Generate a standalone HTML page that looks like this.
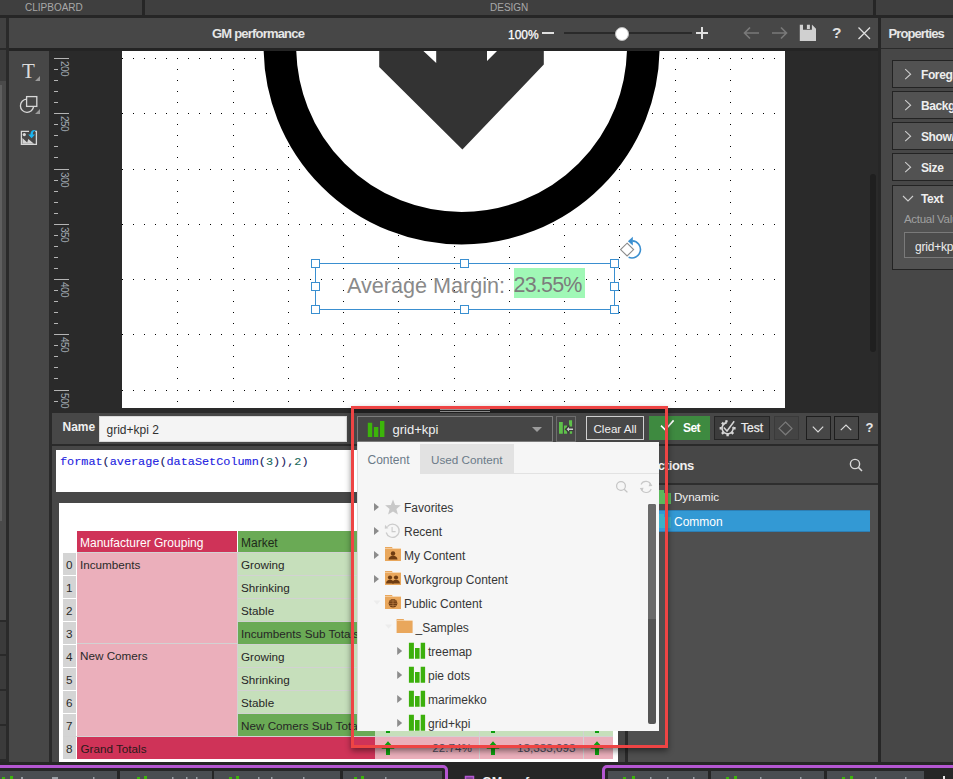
<!DOCTYPE html>
<html><head><meta charset="utf-8"><style>
*{margin:0;padding:0;box-sizing:border-box}
html,body{width:953px;height:779px;overflow:hidden;background:#2a2a2a;font-family:"Liberation Sans",sans-serif}
.a{position:absolute}
.t{position:absolute;white-space:pre;line-height:1}

</style></head><body>
<!-- top strip -->
<div class="a" style="left:0;top:0;width:953px;height:15px;background:#3f3f3f"></div>
<div class="a" style="left:142px;top:0;width:3px;height:15px;background:#262626"></div>
<div class="a" style="left:873px;top:0;width:3px;height:15px;background:#262626"></div>
<div class="a" style="left:0;top:15px;width:953px;height:3px;background:#262626"></div>
<div class="t" style="left:25px;top:3px;font-size:10px;color:#a8a8a8">CLIPBOARD</div>
<div class="t" style="left:490px;top:3px;font-size:10px;color:#a8a8a8">DESIGN</div>
<!-- left column -->
<div class="a" style="left:0;top:18px;width:6px;height:30px;background:#414141"></div>
<div class="a" style="left:0;top:48px;width:6px;height:1.5px;background:#2a2a2a"></div>
<div class="a" style="left:0;top:49.5px;width:6px;height:31.5px;background:#3c3c3c"></div>
<div class="a" style="left:0;top:81px;width:6px;height:539px;background:#4a4a4a"></div>
<div class="a" style="left:0;top:85px;width:2px;height:436px;background:#5f5f5f"></div>
<div class="a" style="left:0;top:622px;width:6px;height:32px;background:#3b3b3b"></div>
<div class="a" style="left:0;top:656px;width:6px;height:33px;background:#3b3b3b"></div>
<div class="a" style="left:0;top:691px;width:6px;height:33px;background:#3b3b3b"></div>
<div class="a" style="left:0;top:726px;width:6px;height:33px;background:#3b3b3b"></div>
<!-- title bar -->
<div class="a" style="left:9px;top:18px;width:869px;height:30px;background:#474747"></div>
<div class="t" style="left:212px;top:27px;font-size:13px;color:#e6e6e6;font-weight:700;letter-spacing:-0.8px">GM performance</div>
<div class="t" style="left:508px;top:28.5px;font-size:12px;color:#fff;-webkit-text-stroke:0.25px #fff">100%</div>
<div class="a" style="left:542px;top:32px;width:12px;height:2px;background:#e0e0e0"></div>
<div class="a" style="left:564px;top:32px;width:128px;height:2px;background:#2a2a2a"></div>
<div class="a" style="left:615px;top:27px;width:14px;height:14px;border-radius:50%;background:#fff;border:1.5px solid #bdbdbd"></div>
<div class="a" style="left:696px;top:32px;width:12px;height:2px;background:#e0e0e0"></div>
<div class="a" style="left:701px;top:27px;width:2px;height:12px;background:#e0e0e0"></div>
<svg class="a" style="left:740px;top:24px" width="140" height="20" viewBox="740 24 140 20">
 <g fill="none" stroke="#7a7a7a" stroke-width="1.6">
  <path d="M744 33H759M750 27.5L744.5 33L750 38.5"/>
  <path d="M772 33H787M781 27.5L786.5 33L781 38.5"/>
 </g>
 <path fill="#d0d0d0" d="M799.8 24.8H812.1L816 28.7V41H799.8Z M803 24.8V29.8H811.9V24.8Z M806.9 24.8H809.9V29H806.9Z" fill-rule="evenodd"/>
 <path fill="none" stroke="#7a7a7a" stroke-width="0" d=""/>
 <g stroke="#e0e0e0" stroke-width="1.3" fill="none"><path d="M858.5 27.5L870 39M870 27.5L858.5 39"/></g>
</svg>
<div class="t" style="left:832px;top:25px;font-size:15.5px;font-weight:700;color:#e0e0e0">?</div>
<div class="a" style="left:9px;top:48px;width:869px;height:3px;background:#242424"></div>
<!-- divider + properties -->
<div class="a" style="left:878px;top:18px;width:3px;height:761px;background:#262626"></div>
<div class="a" style="left:881px;top:18px;width:72px;height:29.5px;background:#474747"></div>
<div class="a" style="left:881px;top:48.5px;width:72px;height:713px;background:#474747"></div>
<div class="t" style="left:888.5px;top:27px;font-size:13px;font-weight:700;color:#e6e6e6;letter-spacing:-0.9px">Properties</div>
<!-- props -->
<div class="a" style="left:892px;top:60px;width:70px;height:28px;background:#525252;border:1.5px solid #232323"></div>
<div class="a" style="left:892px;top:91px;width:70px;height:28px;background:#525252;border:1.5px solid #232323"></div>
<div class="a" style="left:892px;top:122px;width:70px;height:28px;background:#525252;border:1.5px solid #232323"></div>
<div class="a" style="left:892px;top:153px;width:70px;height:28px;background:#525252;border:1.5px solid #232323"></div>
<div class="a" style="left:892px;top:184.5px;width:70px;height:85px;background:#525252;border:1.5px solid #232323"></div>
<svg class="a" style="left:900px;top:60px" width="20" height="150" viewBox="900 60 20 150"><g fill="none" stroke="#cfcfcf" stroke-width="1.1">
 <path d="M905.2 69.2L910.6 74.2L905.2 79.2"/><path d="M905.2 100.2L910.6 105.2L905.2 110.2"/><path d="M905.2 131.2L910.6 136.2L905.2 141.2"/><path d="M905.2 162.2L910.6 167.2L905.2 172.2"/>
 <path d="M903 196L908 201L913 196"/></g></svg>
<div class="t" style="left:921px;top:69px;font-size:12px;font-weight:700;color:#eeeeee;letter-spacing:-0.4px">Foreground</div>
<div class="t" style="left:921px;top:100px;font-size:12px;font-weight:700;color:#eeeeee;letter-spacing:-0.4px">Background</div>
<div class="t" style="left:921px;top:131px;font-size:12px;font-weight:700;color:#eeeeee;letter-spacing:-0.4px">Show/Hide</div>
<div class="t" style="left:921px;top:162px;font-size:12px;font-weight:700;color:#eeeeee;letter-spacing:-0.4px">Size</div>
<div class="t" style="left:921px;top:193px;font-size:12px;font-weight:700;color:#eeeeee;letter-spacing:-0.4px">Text</div>
<div class="t" style="left:904px;top:213.5px;font-size:11.5px;color:#a0a0a0;letter-spacing:-0.3px">Actual Value</div>
<div class="a" style="left:904px;top:232px;width:60px;height:26px;border:1px solid #7a7a7a;background:#4c4c4c"></div>
<div class="t" style="left:915px;top:241px;font-size:12px;color:#ececec;letter-spacing:-0.2px">grid+kpi 2</div>
<!-- /props -->
<!-- left toolbar -->
<div class="a" style="left:9px;top:51px;width:40px;height:711px;background:#474747"></div>
<!-- tbicons -->
<div class="t" style="left:22px;top:61px;font-family:'Liberation Serif',serif;font-size:21px;color:#dcdcdc;line-height:21px">T</div>
<svg class="a" style="left:9px;top:51px" width="40" height="110" viewBox="9 51 40 110">
 <path fill="#9a9a9a" d="M35 81H40V76Z M35 114H40V109Z"/>
 <g fill="none" stroke="#d8d8d8" stroke-width="1.3">
  <rect x="26.6" y="96.6" width="10.2" height="9.8"/>
  <path d="M26.6 99.2A6.6 6.6 0 1 0 33.6 106.4"/>
  <path d="M29 131.4H21.4V144.4H36.4V131.4H35.2"/>
 </g>
 <circle cx="24.3" cy="134.6" r="1.6" fill="#d8d8d8"/>
 <path fill="#d4d4d4" d="M22.4 138L27.2 142.4L28.3 139L34 143.8H22.4Z"/>
 <path fill="#1ab4f0" d="M36.6 130.6C34 129 30.5 130 30.4 134.4H28.2L31.6 138.2L35 134.4H32.8C32.8 132 34.2 130.8 36.6 130.6Z"/>
</svg>
<!-- /tbicons -->
<!-- ruler -->
<div class="a" style="left:54px;top:58px;width:15px;height:1px;background:#b4b4b4"></div>
<div class="a" style="left:54px;top:69px;width:4px;height:1px;background:#b4b4b4"></div>
<div class="a" style="left:54px;top:80px;width:4px;height:1px;background:#b4b4b4"></div>
<div class="a" style="left:54px;top:91px;width:4px;height:1px;background:#b4b4b4"></div>
<div class="a" style="left:54px;top:102px;width:4px;height:1px;background:#b4b4b4"></div>
<div class="a" style="left:54px;top:113px;width:15px;height:1px;background:#b4b4b4"></div>
<div class="a" style="left:54px;top:124px;width:4px;height:1px;background:#b4b4b4"></div>
<div class="a" style="left:54px;top:135px;width:4px;height:1px;background:#b4b4b4"></div>
<div class="a" style="left:54px;top:146px;width:4px;height:1px;background:#b4b4b4"></div>
<div class="a" style="left:54px;top:157px;width:4px;height:1px;background:#b4b4b4"></div>
<div class="a" style="left:54px;top:169px;width:15px;height:1px;background:#b4b4b4"></div>
<div class="a" style="left:54px;top:180px;width:4px;height:1px;background:#b4b4b4"></div>
<div class="a" style="left:54px;top:191px;width:4px;height:1px;background:#b4b4b4"></div>
<div class="a" style="left:54px;top:202px;width:4px;height:1px;background:#b4b4b4"></div>
<div class="a" style="left:54px;top:213px;width:4px;height:1px;background:#b4b4b4"></div>
<div class="a" style="left:54px;top:224px;width:15px;height:1px;background:#b4b4b4"></div>
<div class="a" style="left:54px;top:235px;width:4px;height:1px;background:#b4b4b4"></div>
<div class="a" style="left:54px;top:246px;width:4px;height:1px;background:#b4b4b4"></div>
<div class="a" style="left:54px;top:257px;width:4px;height:1px;background:#b4b4b4"></div>
<div class="a" style="left:54px;top:268px;width:4px;height:1px;background:#b4b4b4"></div>
<div class="a" style="left:54px;top:279px;width:15px;height:1px;background:#b4b4b4"></div>
<div class="a" style="left:54px;top:290px;width:4px;height:1px;background:#b4b4b4"></div>
<div class="a" style="left:54px;top:301px;width:4px;height:1px;background:#b4b4b4"></div>
<div class="a" style="left:54px;top:312px;width:4px;height:1px;background:#b4b4b4"></div>
<div class="a" style="left:54px;top:323px;width:4px;height:1px;background:#b4b4b4"></div>
<div class="a" style="left:54px;top:334px;width:15px;height:1px;background:#b4b4b4"></div>
<div class="a" style="left:54px;top:345px;width:4px;height:1px;background:#b4b4b4"></div>
<div class="a" style="left:54px;top:356px;width:4px;height:1px;background:#b4b4b4"></div>
<div class="a" style="left:54px;top:367px;width:4px;height:1px;background:#b4b4b4"></div>
<div class="a" style="left:54px;top:378px;width:4px;height:1px;background:#b4b4b4"></div>
<div class="a" style="left:54px;top:390px;width:15px;height:1px;background:#b4b4b4"></div>
<div class="a" style="left:54px;top:401px;width:4px;height:1px;background:#b4b4b4"></div>
<div class="t" style="left:59px;top:60px;font-size:10px;color:#a0a8b0;writing-mode:vertical-rl;line-height:10px;letter-spacing:-0.5px;margin-top:0.8px">200</div>
<div class="t" style="left:59px;top:115px;font-size:10px;color:#a0a8b0;writing-mode:vertical-rl;line-height:10px;letter-spacing:-0.5px;margin-top:0.8px">250</div>
<div class="t" style="left:59px;top:171px;font-size:10px;color:#a0a8b0;writing-mode:vertical-rl;line-height:10px;letter-spacing:-0.5px;margin-top:0.8px">300</div>
<div class="t" style="left:59px;top:226px;font-size:10px;color:#a0a8b0;writing-mode:vertical-rl;line-height:10px;letter-spacing:-0.5px;margin-top:0.8px">350</div>
<div class="t" style="left:59px;top:281px;font-size:10px;color:#a0a8b0;writing-mode:vertical-rl;line-height:10px;letter-spacing:-0.5px;margin-top:0.8px">400</div>
<div class="t" style="left:59px;top:336px;font-size:10px;color:#a0a8b0;writing-mode:vertical-rl;line-height:10px;letter-spacing:-0.5px;margin-top:0.8px">450</div>
<div class="t" style="left:59px;top:392px;font-size:10px;color:#a0a8b0;writing-mode:vertical-rl;line-height:10px;letter-spacing:-0.5px;margin-top:0.8px">500</div>
<!-- /ruler -->
<!-- canvas -->
<div class="a" style="left:122px;top:51px;width:663px;height:357px;background:#fff;overflow:hidden">
<svg class="a" style="left:0;top:0" width="663" height="357" viewBox="0 0 663 357" shape-rendering="crispEdges"><path fill="#000" d="M0 7h1v1h-1zM0 62h1v1h-1zM0 118h1v1h-1zM0 173h1v1h-1zM0 228h1v1h-1zM0 283h1v1h-1zM0 339h1v1h-1zM11 7h1v1h-1zM11 62h1v1h-1zM11 118h1v1h-1zM11 173h1v1h-1zM11 228h1v1h-1zM11 283h1v1h-1zM11 339h1v1h-1zM22 7h1v1h-1zM22 62h1v1h-1zM22 118h1v1h-1zM22 173h1v1h-1zM22 228h1v1h-1zM22 283h1v1h-1zM22 339h1v1h-1zM33 7h1v1h-1zM33 62h1v1h-1zM33 118h1v1h-1zM33 173h1v1h-1zM33 228h1v1h-1zM33 283h1v1h-1zM33 339h1v1h-1zM44 7h1v1h-1zM44 62h1v1h-1zM44 118h1v1h-1zM44 173h1v1h-1zM44 228h1v1h-1zM44 283h1v1h-1zM44 339h1v1h-1zM55 7h1v1h-1zM55 18h1v1h-1zM55 29h1v1h-1zM55 40h1v1h-1zM55 51h1v1h-1zM55 62h1v1h-1zM55 73h1v1h-1zM55 84h1v1h-1zM55 95h1v1h-1zM55 106h1v1h-1zM55 118h1v1h-1zM55 129h1v1h-1zM55 140h1v1h-1zM55 151h1v1h-1zM55 162h1v1h-1zM55 173h1v1h-1zM55 184h1v1h-1zM55 195h1v1h-1zM55 206h1v1h-1zM55 217h1v1h-1zM55 228h1v1h-1zM55 239h1v1h-1zM55 250h1v1h-1zM55 261h1v1h-1zM55 272h1v1h-1zM55 283h1v1h-1zM55 294h1v1h-1zM55 305h1v1h-1zM55 316h1v1h-1zM55 327h1v1h-1zM55 339h1v1h-1zM55 350h1v1h-1zM66 7h1v1h-1zM66 62h1v1h-1zM66 118h1v1h-1zM66 173h1v1h-1zM66 228h1v1h-1zM66 283h1v1h-1zM66 339h1v1h-1zM77 7h1v1h-1zM77 62h1v1h-1zM77 118h1v1h-1zM77 173h1v1h-1zM77 228h1v1h-1zM77 283h1v1h-1zM77 339h1v1h-1zM88 7h1v1h-1zM88 62h1v1h-1zM88 118h1v1h-1zM88 173h1v1h-1zM88 228h1v1h-1zM88 283h1v1h-1zM88 339h1v1h-1zM99 7h1v1h-1zM99 62h1v1h-1zM99 118h1v1h-1zM99 173h1v1h-1zM99 228h1v1h-1zM99 283h1v1h-1zM99 339h1v1h-1zM111 7h1v1h-1zM111 18h1v1h-1zM111 29h1v1h-1zM111 40h1v1h-1zM111 51h1v1h-1zM111 62h1v1h-1zM111 73h1v1h-1zM111 84h1v1h-1zM111 95h1v1h-1zM111 106h1v1h-1zM111 118h1v1h-1zM111 129h1v1h-1zM111 140h1v1h-1zM111 151h1v1h-1zM111 162h1v1h-1zM111 173h1v1h-1zM111 184h1v1h-1zM111 195h1v1h-1zM111 206h1v1h-1zM111 217h1v1h-1zM111 228h1v1h-1zM111 239h1v1h-1zM111 250h1v1h-1zM111 261h1v1h-1zM111 272h1v1h-1zM111 283h1v1h-1zM111 294h1v1h-1zM111 305h1v1h-1zM111 316h1v1h-1zM111 327h1v1h-1zM111 339h1v1h-1zM111 350h1v1h-1zM122 7h1v1h-1zM122 62h1v1h-1zM122 118h1v1h-1zM122 173h1v1h-1zM122 228h1v1h-1zM122 283h1v1h-1zM122 339h1v1h-1zM133 7h1v1h-1zM133 62h1v1h-1zM133 118h1v1h-1zM133 173h1v1h-1zM133 228h1v1h-1zM133 283h1v1h-1zM133 339h1v1h-1zM144 7h1v1h-1zM144 62h1v1h-1zM144 118h1v1h-1zM144 173h1v1h-1zM144 228h1v1h-1zM144 283h1v1h-1zM144 339h1v1h-1zM155 7h1v1h-1zM155 62h1v1h-1zM155 118h1v1h-1zM155 173h1v1h-1zM155 228h1v1h-1zM155 283h1v1h-1zM155 339h1v1h-1zM166 7h1v1h-1zM166 18h1v1h-1zM166 29h1v1h-1zM166 40h1v1h-1zM166 51h1v1h-1zM166 62h1v1h-1zM166 73h1v1h-1zM166 84h1v1h-1zM166 95h1v1h-1zM166 106h1v1h-1zM166 118h1v1h-1zM166 129h1v1h-1zM166 140h1v1h-1zM166 151h1v1h-1zM166 162h1v1h-1zM166 173h1v1h-1zM166 184h1v1h-1zM166 195h1v1h-1zM166 206h1v1h-1zM166 217h1v1h-1zM166 228h1v1h-1zM166 239h1v1h-1zM166 250h1v1h-1zM166 261h1v1h-1zM166 272h1v1h-1zM166 283h1v1h-1zM166 294h1v1h-1zM166 305h1v1h-1zM166 316h1v1h-1zM166 327h1v1h-1zM166 339h1v1h-1zM166 350h1v1h-1zM177 7h1v1h-1zM177 62h1v1h-1zM177 118h1v1h-1zM177 173h1v1h-1zM177 228h1v1h-1zM177 283h1v1h-1zM177 339h1v1h-1zM188 7h1v1h-1zM188 62h1v1h-1zM188 118h1v1h-1zM188 173h1v1h-1zM188 228h1v1h-1zM188 283h1v1h-1zM188 339h1v1h-1zM199 7h1v1h-1zM199 62h1v1h-1zM199 118h1v1h-1zM199 173h1v1h-1zM199 228h1v1h-1zM199 283h1v1h-1zM199 339h1v1h-1zM210 7h1v1h-1zM210 62h1v1h-1zM210 118h1v1h-1zM210 173h1v1h-1zM210 228h1v1h-1zM210 283h1v1h-1zM210 339h1v1h-1zM221 7h1v1h-1zM221 18h1v1h-1zM221 29h1v1h-1zM221 40h1v1h-1zM221 51h1v1h-1zM221 62h1v1h-1zM221 73h1v1h-1zM221 84h1v1h-1zM221 95h1v1h-1zM221 106h1v1h-1zM221 118h1v1h-1zM221 129h1v1h-1zM221 140h1v1h-1zM221 151h1v1h-1zM221 162h1v1h-1zM221 173h1v1h-1zM221 184h1v1h-1zM221 195h1v1h-1zM221 206h1v1h-1zM221 217h1v1h-1zM221 228h1v1h-1zM221 239h1v1h-1zM221 250h1v1h-1zM221 261h1v1h-1zM221 272h1v1h-1zM221 283h1v1h-1zM221 294h1v1h-1zM221 305h1v1h-1zM221 316h1v1h-1zM221 327h1v1h-1zM221 339h1v1h-1zM221 350h1v1h-1zM232 7h1v1h-1zM232 62h1v1h-1zM232 118h1v1h-1zM232 173h1v1h-1zM232 228h1v1h-1zM232 283h1v1h-1zM232 339h1v1h-1zM243 7h1v1h-1zM243 62h1v1h-1zM243 118h1v1h-1zM243 173h1v1h-1zM243 228h1v1h-1zM243 283h1v1h-1zM243 339h1v1h-1zM254 7h1v1h-1zM254 62h1v1h-1zM254 118h1v1h-1zM254 173h1v1h-1zM254 228h1v1h-1zM254 283h1v1h-1zM254 339h1v1h-1zM265 7h1v1h-1zM265 62h1v1h-1zM265 118h1v1h-1zM265 173h1v1h-1zM265 228h1v1h-1zM265 283h1v1h-1zM265 339h1v1h-1zM276 7h1v1h-1zM276 18h1v1h-1zM276 29h1v1h-1zM276 40h1v1h-1zM276 51h1v1h-1zM276 62h1v1h-1zM276 73h1v1h-1zM276 84h1v1h-1zM276 95h1v1h-1zM276 106h1v1h-1zM276 118h1v1h-1zM276 129h1v1h-1zM276 140h1v1h-1zM276 151h1v1h-1zM276 162h1v1h-1zM276 173h1v1h-1zM276 184h1v1h-1zM276 195h1v1h-1zM276 206h1v1h-1zM276 217h1v1h-1zM276 228h1v1h-1zM276 239h1v1h-1zM276 250h1v1h-1zM276 261h1v1h-1zM276 272h1v1h-1zM276 283h1v1h-1zM276 294h1v1h-1zM276 305h1v1h-1zM276 316h1v1h-1zM276 327h1v1h-1zM276 339h1v1h-1zM276 350h1v1h-1zM287 7h1v1h-1zM287 62h1v1h-1zM287 118h1v1h-1zM287 173h1v1h-1zM287 228h1v1h-1zM287 283h1v1h-1zM287 339h1v1h-1zM298 7h1v1h-1zM298 62h1v1h-1zM298 118h1v1h-1zM298 173h1v1h-1zM298 228h1v1h-1zM298 283h1v1h-1zM298 339h1v1h-1zM309 7h1v1h-1zM309 62h1v1h-1zM309 118h1v1h-1zM309 173h1v1h-1zM309 228h1v1h-1zM309 283h1v1h-1zM309 339h1v1h-1zM320 7h1v1h-1zM320 62h1v1h-1zM320 118h1v1h-1zM320 173h1v1h-1zM320 228h1v1h-1zM320 283h1v1h-1zM320 339h1v1h-1zM332 7h1v1h-1zM332 18h1v1h-1zM332 29h1v1h-1zM332 40h1v1h-1zM332 51h1v1h-1zM332 62h1v1h-1zM332 73h1v1h-1zM332 84h1v1h-1zM332 95h1v1h-1zM332 106h1v1h-1zM332 118h1v1h-1zM332 129h1v1h-1zM332 140h1v1h-1zM332 151h1v1h-1zM332 162h1v1h-1zM332 173h1v1h-1zM332 184h1v1h-1zM332 195h1v1h-1zM332 206h1v1h-1zM332 217h1v1h-1zM332 228h1v1h-1zM332 239h1v1h-1zM332 250h1v1h-1zM332 261h1v1h-1zM332 272h1v1h-1zM332 283h1v1h-1zM332 294h1v1h-1zM332 305h1v1h-1zM332 316h1v1h-1zM332 327h1v1h-1zM332 339h1v1h-1zM332 350h1v1h-1zM343 7h1v1h-1zM343 62h1v1h-1zM343 118h1v1h-1zM343 173h1v1h-1zM343 228h1v1h-1zM343 283h1v1h-1zM343 339h1v1h-1zM354 7h1v1h-1zM354 62h1v1h-1zM354 118h1v1h-1zM354 173h1v1h-1zM354 228h1v1h-1zM354 283h1v1h-1zM354 339h1v1h-1zM365 7h1v1h-1zM365 62h1v1h-1zM365 118h1v1h-1zM365 173h1v1h-1zM365 228h1v1h-1zM365 283h1v1h-1zM365 339h1v1h-1zM376 7h1v1h-1zM376 62h1v1h-1zM376 118h1v1h-1zM376 173h1v1h-1zM376 228h1v1h-1zM376 283h1v1h-1zM376 339h1v1h-1zM387 7h1v1h-1zM387 18h1v1h-1zM387 29h1v1h-1zM387 40h1v1h-1zM387 51h1v1h-1zM387 62h1v1h-1zM387 73h1v1h-1zM387 84h1v1h-1zM387 95h1v1h-1zM387 106h1v1h-1zM387 118h1v1h-1zM387 129h1v1h-1zM387 140h1v1h-1zM387 151h1v1h-1zM387 162h1v1h-1zM387 173h1v1h-1zM387 184h1v1h-1zM387 195h1v1h-1zM387 206h1v1h-1zM387 217h1v1h-1zM387 228h1v1h-1zM387 239h1v1h-1zM387 250h1v1h-1zM387 261h1v1h-1zM387 272h1v1h-1zM387 283h1v1h-1zM387 294h1v1h-1zM387 305h1v1h-1zM387 316h1v1h-1zM387 327h1v1h-1zM387 339h1v1h-1zM387 350h1v1h-1zM398 7h1v1h-1zM398 62h1v1h-1zM398 118h1v1h-1zM398 173h1v1h-1zM398 228h1v1h-1zM398 283h1v1h-1zM398 339h1v1h-1zM409 7h1v1h-1zM409 62h1v1h-1zM409 118h1v1h-1zM409 173h1v1h-1zM409 228h1v1h-1zM409 283h1v1h-1zM409 339h1v1h-1zM420 7h1v1h-1zM420 62h1v1h-1zM420 118h1v1h-1zM420 173h1v1h-1zM420 228h1v1h-1zM420 283h1v1h-1zM420 339h1v1h-1zM431 7h1v1h-1zM431 62h1v1h-1zM431 118h1v1h-1zM431 173h1v1h-1zM431 228h1v1h-1zM431 283h1v1h-1zM431 339h1v1h-1zM442 7h1v1h-1zM442 18h1v1h-1zM442 29h1v1h-1zM442 40h1v1h-1zM442 51h1v1h-1zM442 62h1v1h-1zM442 73h1v1h-1zM442 84h1v1h-1zM442 95h1v1h-1zM442 106h1v1h-1zM442 118h1v1h-1zM442 129h1v1h-1zM442 140h1v1h-1zM442 151h1v1h-1zM442 162h1v1h-1zM442 173h1v1h-1zM442 184h1v1h-1zM442 195h1v1h-1zM442 206h1v1h-1zM442 217h1v1h-1zM442 228h1v1h-1zM442 239h1v1h-1zM442 250h1v1h-1zM442 261h1v1h-1zM442 272h1v1h-1zM442 283h1v1h-1zM442 294h1v1h-1zM442 305h1v1h-1zM442 316h1v1h-1zM442 327h1v1h-1zM442 339h1v1h-1zM442 350h1v1h-1zM453 7h1v1h-1zM453 62h1v1h-1zM453 118h1v1h-1zM453 173h1v1h-1zM453 228h1v1h-1zM453 283h1v1h-1zM453 339h1v1h-1zM464 7h1v1h-1zM464 62h1v1h-1zM464 118h1v1h-1zM464 173h1v1h-1zM464 228h1v1h-1zM464 283h1v1h-1zM464 339h1v1h-1zM475 7h1v1h-1zM475 62h1v1h-1zM475 118h1v1h-1zM475 173h1v1h-1zM475 228h1v1h-1zM475 283h1v1h-1zM475 339h1v1h-1zM486 7h1v1h-1zM486 62h1v1h-1zM486 118h1v1h-1zM486 173h1v1h-1zM486 228h1v1h-1zM486 283h1v1h-1zM486 339h1v1h-1zM497 7h1v1h-1zM497 18h1v1h-1zM497 29h1v1h-1zM497 40h1v1h-1zM497 51h1v1h-1zM497 62h1v1h-1zM497 73h1v1h-1zM497 84h1v1h-1zM497 95h1v1h-1zM497 106h1v1h-1zM497 118h1v1h-1zM497 129h1v1h-1zM497 140h1v1h-1zM497 151h1v1h-1zM497 162h1v1h-1zM497 173h1v1h-1zM497 184h1v1h-1zM497 195h1v1h-1zM497 206h1v1h-1zM497 217h1v1h-1zM497 228h1v1h-1zM497 239h1v1h-1zM497 250h1v1h-1zM497 261h1v1h-1zM497 272h1v1h-1zM497 283h1v1h-1zM497 294h1v1h-1zM497 305h1v1h-1zM497 316h1v1h-1zM497 327h1v1h-1zM497 339h1v1h-1zM497 350h1v1h-1zM508 7h1v1h-1zM508 62h1v1h-1zM508 118h1v1h-1zM508 173h1v1h-1zM508 228h1v1h-1zM508 283h1v1h-1zM508 339h1v1h-1zM519 7h1v1h-1zM519 62h1v1h-1zM519 118h1v1h-1zM519 173h1v1h-1zM519 228h1v1h-1zM519 283h1v1h-1zM519 339h1v1h-1zM530 7h1v1h-1zM530 62h1v1h-1zM530 118h1v1h-1zM530 173h1v1h-1zM530 228h1v1h-1zM530 283h1v1h-1zM530 339h1v1h-1zM541 7h1v1h-1zM541 62h1v1h-1zM541 118h1v1h-1zM541 173h1v1h-1zM541 228h1v1h-1zM541 283h1v1h-1zM541 339h1v1h-1zM553 7h1v1h-1zM553 18h1v1h-1zM553 29h1v1h-1zM553 40h1v1h-1zM553 51h1v1h-1zM553 62h1v1h-1zM553 73h1v1h-1zM553 84h1v1h-1zM553 95h1v1h-1zM553 106h1v1h-1zM553 118h1v1h-1zM553 129h1v1h-1zM553 140h1v1h-1zM553 151h1v1h-1zM553 162h1v1h-1zM553 173h1v1h-1zM553 184h1v1h-1zM553 195h1v1h-1zM553 206h1v1h-1zM553 217h1v1h-1zM553 228h1v1h-1zM553 239h1v1h-1zM553 250h1v1h-1zM553 261h1v1h-1zM553 272h1v1h-1zM553 283h1v1h-1zM553 294h1v1h-1zM553 305h1v1h-1zM553 316h1v1h-1zM553 327h1v1h-1zM553 339h1v1h-1zM553 350h1v1h-1zM564 7h1v1h-1zM564 62h1v1h-1zM564 118h1v1h-1zM564 173h1v1h-1zM564 228h1v1h-1zM564 283h1v1h-1zM564 339h1v1h-1zM575 7h1v1h-1zM575 62h1v1h-1zM575 118h1v1h-1zM575 173h1v1h-1zM575 228h1v1h-1zM575 283h1v1h-1zM575 339h1v1h-1zM586 7h1v1h-1zM586 62h1v1h-1zM586 118h1v1h-1zM586 173h1v1h-1zM586 228h1v1h-1zM586 283h1v1h-1zM586 339h1v1h-1zM597 7h1v1h-1zM597 62h1v1h-1zM597 118h1v1h-1zM597 173h1v1h-1zM597 228h1v1h-1zM597 283h1v1h-1zM597 339h1v1h-1zM608 7h1v1h-1zM608 18h1v1h-1zM608 29h1v1h-1zM608 40h1v1h-1zM608 51h1v1h-1zM608 62h1v1h-1zM608 73h1v1h-1zM608 84h1v1h-1zM608 95h1v1h-1zM608 106h1v1h-1zM608 118h1v1h-1zM608 129h1v1h-1zM608 140h1v1h-1zM608 151h1v1h-1zM608 162h1v1h-1zM608 173h1v1h-1zM608 184h1v1h-1zM608 195h1v1h-1zM608 206h1v1h-1zM608 217h1v1h-1zM608 228h1v1h-1zM608 239h1v1h-1zM608 250h1v1h-1zM608 261h1v1h-1zM608 272h1v1h-1zM608 283h1v1h-1zM608 294h1v1h-1zM608 305h1v1h-1zM608 316h1v1h-1zM608 327h1v1h-1zM608 339h1v1h-1zM608 350h1v1h-1zM619 7h1v1h-1zM619 62h1v1h-1zM619 118h1v1h-1zM619 173h1v1h-1zM619 228h1v1h-1zM619 283h1v1h-1zM619 339h1v1h-1zM630 7h1v1h-1zM630 62h1v1h-1zM630 118h1v1h-1zM630 173h1v1h-1zM630 228h1v1h-1zM630 283h1v1h-1zM630 339h1v1h-1zM641 7h1v1h-1zM641 62h1v1h-1zM641 118h1v1h-1zM641 173h1v1h-1zM641 228h1v1h-1zM641 283h1v1h-1zM641 339h1v1h-1zM652 7h1v1h-1zM652 62h1v1h-1zM652 118h1v1h-1zM652 173h1v1h-1zM652 228h1v1h-1zM652 283h1v1h-1zM652 339h1v1h-1zM663 7h1v1h-1zM663 18h1v1h-1zM663 29h1v1h-1zM663 40h1v1h-1zM663 51h1v1h-1zM663 62h1v1h-1zM663 73h1v1h-1zM663 84h1v1h-1zM663 95h1v1h-1zM663 106h1v1h-1zM663 118h1v1h-1zM663 129h1v1h-1zM663 140h1v1h-1zM663 151h1v1h-1zM663 162h1v1h-1zM663 173h1v1h-1zM663 184h1v1h-1zM663 195h1v1h-1zM663 206h1v1h-1zM663 217h1v1h-1zM663 228h1v1h-1zM663 239h1v1h-1zM663 250h1v1h-1zM663 261h1v1h-1zM663 272h1v1h-1zM663 283h1v1h-1zM663 294h1v1h-1zM663 305h1v1h-1zM663 316h1v1h-1zM663 327h1v1h-1zM663 339h1v1h-1zM663 350h1v1h-1z"/></svg>
<!-- shapes -->
<svg class="a" style="left:0;top:0" width="663" height="357" viewBox="122 51 663 357">
 <circle cx="461.6" cy="46.5" r="181.7" fill="#fff" stroke="#000" stroke-width="32.6"/>
 <path fill="#333333" d="M379.2 40V67L462.4 149.5L543.8 64.6V40Z M423.4 51H436.2V63Z M487 51H497L487 61Z" fill-rule="evenodd"/>
 <g fill="none" stroke="#3a8fd0" stroke-width="1">
  <rect x="315.5" y="263.5" width="299" height="46"/>
 </g>
 <g fill="#fff" stroke="#3a8fd0" stroke-width="1">
  <rect x="311.5" y="259.5" width="8" height="8"/>
  <rect x="460.5" y="259.5" width="8" height="8"/>
  <rect x="610.5" y="259.5" width="8" height="8"/>
  <rect x="311.5" y="282.5" width="8" height="8"/>
  <rect x="610.5" y="282.5" width="8" height="8"/>
  <rect x="311.5" y="305.5" width="8" height="8"/>
  <rect x="460.5" y="305.5" width="8" height="8"/>
  <rect x="610.5" y="305.5" width="8" height="8"/>
 </g>
 <rect x="514" y="268" width="71" height="30" fill="#a0f8b6"/>
 <path d="M627.1 243.2L633.6 249.6L627.1 256L620.6 249.6Z" fill="#fff" stroke="#8a8a8a" stroke-width="1.1"/>
 <path d="M632.4 240.9A8.5 8.5 0 1 1 628.6 257.2" fill="none" stroke="#3a8fd0" stroke-width="1.6"/>
 <path d="M627.9 241.2L632.8 236.8V245.6Z" fill="#3a8fd0"/>
</svg>
<div class="t" style="left:225px;top:223.5px;font-size:21.6px;color:#8a8a8a">Average Margin:</div>
<div class="t" style="left:391.5px;top:223.5px;font-size:21.5px;color:#7c7c7c;letter-spacing:-0.8px">23.55%</div>
<!-- /shapes -->
</div>
<!-- right dark scrollbar -->
<div class="a" style="left:870px;top:174px;width:6px;height:178px;background:#1f1f1f;border-radius:3px"></div>
<!-- bottom band -->
<div class="a" style="left:52px;top:413px;width:826px;height:31px;background:#474747"></div>
<div class="t" style="left:62.5px;top:420.5px;font-size:12px;font-weight:700;color:#f0f0f0">Name</div>
<div class="a" style="left:99px;top:416px;width:248px;height:25.5px;background:#f4f4f4;border:1px solid #dadada"></div>
<div class="t" style="left:106.5px;top:423.5px;font-size:12px;color:#303030">grid+kpi 2</div>
<!-- left panel -->
<div class="a" style="left:52px;top:446px;width:573px;height:316px;background:#474747"></div>
<div class="a" style="left:56px;top:450px;width:566px;height:42px;background:#fff"></div>
<div class="t" style="left:60px;top:456.5px;font-family:'Liberation Mono',monospace;font-size:11.83px;color:#1c1ce0;-webkit-text-stroke:0.1px">format<span style="color:#1a1a60">(</span>average<span style="color:#1a1a60">(</span>dataSetColumn<span style="color:#1a1a60">(</span><span style="color:#1a6a5a">3</span><span style="color:#1a1a60">)),</span><span style="color:#1a6a5a">2</span><span style="color:#1a1a60">)</span></div>
<!-- grid -->
<div class="a" style="left:59px;top:503px;width:559px;height:259px;background:#fff;overflow:hidden">
 <div class="a" style="left:18px;top:28px;width:160px;height:21px;background:#cf3358"></div>
 <div class="a" style="left:179px;top:28px;width:137px;height:21px;background:#6aaa55"></div>
 <div class="t" style="left:21px;top:33.5px;font-size:12px;color:#fff">Manufacturer Grouping</div>
 <div class="t" style="left:182px;top:33.5px;font-size:12px;color:#1e2a1a">Market</div>
 <div class="a" style="left:18px;top:49px;width:536px;height:1px;background:#d2d2d2;"></div>
 <div class="a" style="left:18px;top:50px;width:160px;height:90px;background:#ebafbb;"></div>
 <div class="a" style="left:18px;top:141px;width:160px;height:92px;background:#ebafbb;"></div>
 <div class="a" style="left:18px;top:140px;width:160px;height:1px;background:#d2d2d2;"></div>
 <div class="a" style="left:178px;top:50px;width:1px;height:183px;background:#d2d2d2;"></div>
 <div class="a" style="left:4px;top:50px;width:13px;height:22px;background:#d4d4d4;"></div>
 <div class="t" style="left:7px;top:57px;font-size:11.7px;color:#2a2a2a;margin-top:-1.5px;">0</div>
 <div class="a" style="left:179px;top:50px;width:137px;height:22px;background:#c6dfbb;"></div>
 <div class="a" style="left:316px;top:50px;width:238px;height:22px;background:#c6dfbb;"></div>
 <div class="t" style="left:182px;top:57px;font-size:11.7px;color:#262626;margin-top:-1.5px;">Growing</div>
 <div class="a" style="left:4px;top:73px;width:13px;height:22px;background:#d4d4d4;"></div>
 <div class="t" style="left:7px;top:80px;font-size:11.7px;color:#2a2a2a;margin-top:-1.5px;">1</div>
 <div class="a" style="left:179px;top:73px;width:137px;height:22px;background:#c6dfbb;"></div>
 <div class="a" style="left:316px;top:73px;width:238px;height:22px;background:#c6dfbb;"></div>
 <div class="a" style="left:179px;top:72px;width:375px;height:1px;background:#d2d2d2;"></div>
 <div class="t" style="left:182px;top:80px;font-size:11.7px;color:#262626;margin-top:-1.5px;">Shrinking</div>
 <div class="a" style="left:4px;top:96px;width:13px;height:22px;background:#d4d4d4;"></div>
 <div class="t" style="left:7px;top:103px;font-size:11.7px;color:#2a2a2a;margin-top:-1.5px;">2</div>
 <div class="a" style="left:179px;top:96px;width:137px;height:22px;background:#c6dfbb;"></div>
 <div class="a" style="left:316px;top:96px;width:238px;height:22px;background:#c6dfbb;"></div>
 <div class="a" style="left:179px;top:95px;width:375px;height:1px;background:#d2d2d2;"></div>
 <div class="t" style="left:182px;top:103px;font-size:11.7px;color:#262626;margin-top:-1.5px;">Stable</div>
 <div class="a" style="left:4px;top:119px;width:13px;height:22px;background:#d4d4d4;"></div>
 <div class="t" style="left:7px;top:126px;font-size:11.7px;color:#2a2a2a;margin-top:-1.5px;">3</div>
 <div class="a" style="left:179px;top:119px;width:137px;height:22px;background:#6aaa55;"></div>
 <div class="a" style="left:316px;top:119px;width:238px;height:22px;background:#6aaa55;"></div>
 <div class="a" style="left:179px;top:118px;width:375px;height:1px;background:#d2d2d2;"></div>
 <div class="t" style="left:182px;top:126px;font-size:11.7px;color:#262626;margin-top:-1.5px;">Incumbents Sub Totals</div>
 <div class="a" style="left:4px;top:142px;width:13px;height:22px;background:#d4d4d4;"></div>
 <div class="t" style="left:7px;top:149px;font-size:11.7px;color:#2a2a2a;margin-top:-1.5px;">4</div>
 <div class="a" style="left:179px;top:142px;width:137px;height:22px;background:#c6dfbb;"></div>
 <div class="a" style="left:316px;top:142px;width:238px;height:22px;background:#c6dfbb;"></div>
 <div class="a" style="left:179px;top:141px;width:375px;height:1px;background:#d2d2d2;"></div>
 <div class="t" style="left:182px;top:149px;font-size:11.7px;color:#262626;margin-top:-1.5px;">Growing</div>
 <div class="a" style="left:4px;top:165px;width:13px;height:22px;background:#d4d4d4;"></div>
 <div class="t" style="left:7px;top:172px;font-size:11.7px;color:#2a2a2a;margin-top:-1.5px;">5</div>
 <div class="a" style="left:179px;top:165px;width:137px;height:22px;background:#c6dfbb;"></div>
 <div class="a" style="left:316px;top:165px;width:238px;height:22px;background:#c6dfbb;"></div>
 <div class="a" style="left:179px;top:164px;width:375px;height:1px;background:#d2d2d2;"></div>
 <div class="t" style="left:182px;top:172px;font-size:11.7px;color:#262626;margin-top:-1.5px;">Shrinking</div>
 <div class="a" style="left:4px;top:188px;width:13px;height:22px;background:#d4d4d4;"></div>
 <div class="t" style="left:7px;top:195px;font-size:11.7px;color:#2a2a2a;margin-top:-1.5px;">6</div>
 <div class="a" style="left:179px;top:188px;width:137px;height:22px;background:#c6dfbb;"></div>
 <div class="a" style="left:316px;top:188px;width:238px;height:22px;background:#c6dfbb;"></div>
 <div class="a" style="left:179px;top:187px;width:375px;height:1px;background:#d2d2d2;"></div>
 <div class="t" style="left:182px;top:195px;font-size:11.7px;color:#262626;margin-top:-1.5px;">Stable</div>
 <div class="a" style="left:4px;top:211px;width:13px;height:22px;background:#d4d4d4;"></div>
 <div class="t" style="left:7px;top:218px;font-size:11.7px;color:#2a2a2a;margin-top:-1.5px;">7</div>
 <div class="a" style="left:179px;top:211px;width:137px;height:22px;background:#6aaa55;"></div>
 <div class="a" style="left:316px;top:211px;width:238px;height:22px;background:#c6dfbb;"></div>
 <div class="a" style="left:179px;top:210px;width:375px;height:1px;background:#d2d2d2;"></div>
 <div class="t" style="left:182px;top:218px;font-size:11.7px;color:#262626;margin-top:-1.5px;">New Comers Sub Totals</div>
 <div class="a" style="left:4px;top:234px;width:13px;height:22px;background:#d4d4d4;"></div>
 <div class="t" style="left:7px;top:241px;font-size:11.7px;color:#2a2a2a;margin-top:-1.5px;">8</div>
 <div class="a" style="left:4px;top:233px;width:550px;height:1px;background:#d2d2d2;"></div>
 <div class="a" style="left:18px;top:234px;width:298px;height:22px;background:#cf3358;"></div>
 <div class="a" style="left:316px;top:234px;width:238px;height:22px;background:#ebafbb;"></div>
 <div class="t" style="left:21.5px;top:241px;font-size:11.7px;color:#2a1a1a;margin-top:-1.5px;">Grand Totals</div>
 <div class="t" style="left:21px;top:58px;font-size:11.7px;color:#2a2a2a;margin-top:-2px;">Incumbents</div>
 <div class="t" style="left:21px;top:149px;font-size:11.7px;color:#2a2a2a;margin-top:-2px;">New Comers</div>
 <div class="a" style="left:420px;top:210px;width:1px;height:46px;background:#d2d2d2;"></div>
 <div class="a" style="left:524px;top:210px;width:1px;height:46px;background:#d2d2d2;"></div>
 <svg class="a" style="left:322px;top:238px" width="14" height="15" viewBox="0 0 14 15"><path d="M7 0.2L13.6 7.7H9V14H5V7.7H0.4Z" fill="#0e9f0e"/></svg>
 <div class="a" style="left:327px;top:228.4px;width:4px;height:1.4px;background:#0e9f0e;"></div>
 <svg class="a" style="left:426.5px;top:238px" width="14" height="15" viewBox="0 0 14 15"><path d="M7 0.2L13.6 7.7H9V14H5V7.7H0.4Z" fill="#0e9f0e"/></svg>
 <div class="a" style="left:431.5px;top:228.4px;width:4px;height:1.4px;background:#0e9f0e;"></div>
 <svg class="a" style="left:531px;top:238px" width="14" height="15" viewBox="0 0 14 15"><path d="M7 0.2L13.6 7.7H9V14H5V7.7H0.4Z" fill="#0e9f0e"/></svg>
 <div class="a" style="left:536px;top:228.4px;width:4px;height:1.4px;background:#0e9f0e;"></div>
 <div class="t" style="left:413px;top:239px;font-size:11.7px;color:#4a4a5a;transform:translateX(-100%)">22.74%</div>
 <div class="t" style="left:516.5px;top:239px;font-size:11.7px;color:#4a4a5a;transform:translateX(-100%)">13,333,093</div>
</div>
<!-- functions panel -->
<div class="a" style="left:625px;top:446px;width:3px;height:316px;background:#2a2a2a"></div>
<div class="a" style="left:628px;top:446px;width:250px;height:37px;background:#474747"></div>
<div class="a" style="left:628px;top:483px;width:250px;height:2px;background:#2e2e2e"></div>
<div class="a" style="left:628px;top:485px;width:250px;height:277px;background:#4f4f4f"></div>
<div class="t" style="left:635px;top:459.2px;font-size:13px;font-weight:700;color:#f0f0f0;letter-spacing:-0.35px">Functions</div>
<svg class="a" style="left:848px;top:457px" width="16" height="16" viewBox="848 457 16 16"><circle cx="855" cy="464" r="4.6" fill="none" stroke="#d8d8d8" stroke-width="1.4"/><path d="M858.4 467.4L862 471" stroke="#d8d8d8" stroke-width="1.5"/></svg>
<div class="a" style="left:657px;top:493px;width:14px;height:11px;background:#5cb85c"></div><div class="a" style="left:657px;top:490px;width:7px;height:3px;background:#5cb85c"></div>
<div class="t" style="left:674px;top:491px;font-size:11.6px;color:#f2f2f2">Dynamic</div>
<div class="a" style="left:640px;top:510px;width:230px;height:21.5px;background:#3399d4;border-top:1px solid #2d7fb5;border-bottom:1px solid #2d7fb5"></div>
<div class="a" style="left:657px;top:516.5px;width:14px;height:11.5px;background:#3cb0c8"></div><div class="a" style="left:657px;top:514px;width:7px;height:2.5px;background:#3cb0c8"></div>
<div class="t" style="left:674px;top:515.5px;font-size:12px;color:#fff">Common</div>
<!-- toolbar buttons -->
<div class="a" style="left:649px;top:416px;width:61px;height:24px;background:#3e8a40"></div>
<svg class="a" style="left:655px;top:418px" width="24" height="20" viewBox="655 418 24 20"><path d="M661 425.6L665.3 429.8L673.6 420.4" fill="none" stroke="#fff" stroke-width="1.6"/></svg>
<div class="t" style="left:683px;top:422px;font-size:12px;font-weight:700;color:#fff;letter-spacing:-0.6px">Set</div>
<div class="a" style="left:713.5px;top:416px;width:56.5px;height:24px;background:#3c3c3c;border:1px solid #262626"></div>
<svg class="a" style="left:718px;top:418px" width="20" height="21" viewBox="718 418 20 21">
 <path d="M733.01 426.75A5.6 5.6 0 1 1 726.82 422.65" fill="none" stroke="#d6d6d6" stroke-width="1.6"/>
 <path d="M733.50 428.20L735.60 428.20M731.77 432.37L733.26 433.86M727.60 434.10L727.60 436.20M723.43 432.37L721.94 433.86M721.70 428.20L719.60 428.20M723.43 424.03L721.94 422.54M726.58 422.39L726.21 420.32" stroke="#d6d6d6" stroke-width="2.4"/>
 <path d="M723.8 427.6L727 431L734.2 421.2" fill="none" stroke="#d6d6d6" stroke-width="1.5"/>
</svg>
<div class="t" style="left:741px;top:422px;font-size:12px;color:#ececec;-webkit-text-stroke:0.25px #ececec">Test</div>
<div class="a" style="left:774.4px;top:415.5px;width:24.5px;height:24.2px;background:#444;border:1px solid #3a3a3a"></div>
<svg class="a" style="left:778px;top:420px" width="17" height="17" viewBox="778 420 17 17"><path d="M785.5 422L792 428.4L785.5 434.8L779 428.4Z" fill="none" stroke="#7a7a7a" stroke-width="1.2"/></svg>
<div class="a" style="left:806px;top:415.5px;width:25px;height:24.2px;border:1.5px solid #1e1e1e"></div>
<svg class="a" style="left:806px;top:416px" width="26" height="25" viewBox="806 416 26 25"><path d="M812.8 426.6L818 431.8L823.2 426.6" fill="none" stroke="#dcdcdc" stroke-width="1.2"/></svg>
<div class="a" style="left:834px;top:415.5px;width:25px;height:24.2px;border:1.5px solid #1e1e1e"></div>
<svg class="a" style="left:834px;top:416px" width="26" height="25" viewBox="834 416 26 25"><path d="M840.8 430.2L846 425L851.2 430.2" fill="none" stroke="#dcdcdc" stroke-width="1.2"/></svg>
<div class="t" style="left:865.5px;top:421px;font-size:13px;font-weight:700;color:#e8e8e8">?</div>
<!-- popup -->
<div class="a" style="left:351px;top:409px;width:317px;height:4px;background:#1f1f1f"></div>
<div class="a" style="left:440px;top:409px;width:50px;height:1px;background:#959595"></div>
<div class="a" style="left:440px;top:411px;width:50px;height:1px;background:#8a8a8a"></div>
<!-- combo -->
<div class="a" style="left:357px;top:416px;width:196px;height:25.5px;background:#464646;border:1px solid #7c7c7c"></div>
<svg class="a" style="left:367px;top:421px" width="18" height="17" viewBox="367 421 18 17"><path d="M367.8 422.8h4.4V437h-4.4z M373.9 426.9h4.4V437h-4.4z M380 421h4.4V437H380z" fill="#3cb50a"/></svg>
<div class="t" style="left:392.5px;top:423px;font-size:13px;color:#f0f0f0">grid+kpi</div>
<svg class="a" style="left:530px;top:425px" width="14" height="8" viewBox="530 425 14 8"><path d="M532 427H542L537 432Z" fill="#9c9c9c"/></svg>
<div class="a" style="left:556px;top:416px;width:20px;height:25.5px;border:1px solid #6e6e6e"></div>
<svg class="a" style="left:556px;top:416px" width="20" height="26" viewBox="556 416 20 26"><path d="M559 422h3.8v11.7H559z M564 425.4h3.1v8.3H564z M569 420.2h3.1v6.2H569z M569.6 431.2h2.5v2.5h-2.5z" fill="#5ec24a"/><path d="M565.6 429.3L568.8 426.2V428.2H573.2V430.4H568.8V432.4Z" fill="#3a3a3a" stroke="#3a3a3a" stroke-width="1.4"/><path d="M566.6 429.3L569 427V428.5H573.1V430.1H569V431.6Z" fill="#cfcfcf"/></svg>
<div class="a" style="left:586px;top:416px;width:58px;height:24px;border:1.5px solid #d0d0d0"></div>
<div class="t" style="left:593.5px;top:422.5px;font-size:11.6px;color:#f0f0f0">Clear All</div>
<!-- popup body -->
<div class="a" style="left:357px;top:442px;width:302px;height:289px;background:#f6f6f6;border-left:1px solid #dcdcdc"></div>
<div class="a" style="left:420px;top:444px;width:94px;height:29.5px;background:#e2e2e2"></div>
<div class="a" style="left:514px;top:473px;width:145px;height:1px;background:#e2e2e2"></div>
<div class="t" style="left:367.5px;top:454px;font-size:12px;color:#6b7a88">Content</div>
<div class="t" style="left:431px;top:454px;font-size:11.7px;color:#6b7a88">Used Content</div>
<svg class="a" style="left:612px;top:478px" width="44" height="18" viewBox="612 478 44 18">
 <circle cx="621" cy="486" r="4.4" fill="none" stroke="#c4c4c4" stroke-width="1.2"/><path d="M624.2 489.2L627.4 492.4" stroke="#c4c4c4" stroke-width="1.3"/>
 <path d="M641 484.5A5.3 5.3 0 0 1 651 485.5M651.2 489A5.3 5.3 0 0 1 641 488" fill="none" stroke="#c8c8c8" stroke-width="1.1"/>
 <path d="M650 482.5L652.4 486L648.6 486.3Z M642.2 491.5L639.8 488L643.6 487.7Z" fill="#c8c8c8"/>
</svg>
<div class="a" style="left:648px;top:504px;width:8px;height:220px;background:#555;border-radius:2px"></div>
<div class="a" style="left:648px;top:504px;width:8px;height:115px;background:#6a6a6a;border-radius:2px 2px 0 0"></div>
<!-- tree --><div class="a" style="left:358px;top:474px;width:290px;height:257px;overflow:hidden"><svg class="a" style="left:0;top:0" width="290" height="257" viewBox="358 474 290 257">
<path d="M374.0 503.1L379.0 507.1L374.0 511.1Z" fill="#8c8c8c"/>
<path d="M393.00 499.60L395.12 504.99L400.89 505.34L396.42 509.01L397.88 514.61L393.00 511.50L388.12 514.61L389.58 509.01L385.11 505.34L390.88 504.99Z" fill="#c8c8c8"/>
<path d="M374.0 527.1L379.0 531.1L374.0 535.1Z" fill="#8c8c8c"/>
<path d="M387.40000000000003 526.6A6.6 6.6 0 1 1 386.20000000000005 532.5" fill="none" stroke="#cccccc" stroke-width="1.3"/>
<path d="M385.0 524.7L388.40000000000003 528.2L384.8 528.8Z" fill="#cccccc"/>
<path d="M392.1 527V531.6H395.6" fill="none" stroke="#cccccc" stroke-width="1.1"/>
<path d="M374.0 551.1L379.0 555.1L374.0 559.1Z" fill="#8c8c8c"/>
<path d="M385.0 547h7l1 2H401.0V561H385.0Z" fill="#e9a75c"/>
<path d="M385.0 548.5H401.0" stroke="#f6d2a6" stroke-width="0.8"/>
<circle cx="393.0" cy="553.5" r="2.2" fill="#6e3c12"/><path d="M388.5 559.5Q389.0 555.8 393.0 555.8Q397.0 555.8 397.5 559.5Z" fill="#6e3c12"/>
<path d="M374.0 575.1L379.0 579.1L374.0 583.1Z" fill="#8c8c8c"/>
<path d="M385.0 571h7l1 2H401.0V585H385.0Z" fill="#e9a75c"/>
<path d="M385.0 572.5H401.0" stroke="#f6d2a6" stroke-width="0.8"/>
<circle cx="390.0" cy="577.5" r="2.1" fill="#6e3c12"/><path d="M386.0 583.5Q386.4 579.8 390.0 579.8Q393.6 579.8 394.0 583.5Z" fill="#6e3c12"/>
<circle cx="396.0" cy="577.5" r="2.1" fill="#6e3c12"/><path d="M392.0 583.5Q392.4 579.8 396.0 579.8Q399.6 579.8 400.0 583.5Z" fill="#6e3c12"/>
<path d="M373.5 600.5H380.5L377.0 604.8Z" fill="#ececec"/>
<path d="M385.0 595h7l1 2H401.0V609H385.0Z" fill="#e9a75c"/>
<path d="M385.0 596.5H401.0" stroke="#f6d2a6" stroke-width="0.8"/>
<circle cx="393.0" cy="603.3" r="4.3" fill="#6e3c12"/><path d="M388.8 603.3H397.2M393.0 599V607.6M389.5 601H396.5M389.5 605.5H396.5" stroke="#c98a4a" stroke-width="0.6"/>
<path d="M385.1 624.5H392.1L388.6 628.8Z" fill="#ececec"/>
<path d="M396.6 619h7l1 2H412.6V633H396.6Z" fill="#e9a75c"/>
<path d="M396.6 620.5H412.6" stroke="#f6d2a6" stroke-width="0.8"/>
<path d="M397.2 647.1L402.2 651.1L397.2 655.1Z" fill="#8c8c8c"/>
<path d="M408.9 642.7h5v16h-5z M415.0 648h4.6v10.7h-4.6z M420.7 642.7h4.4v16h-4.4z" fill="#3cb00c"/>
<path d="M397.2 671.1L402.2 675.1L397.2 679.1Z" fill="#8c8c8c"/>
<path d="M408.9 666.7h5v16h-5z M415.0 672h4.6v10.7h-4.6z M420.7 666.7h4.4v16h-4.4z" fill="#3cb00c"/>
<path d="M397.2 695.1L402.2 699.1L397.2 703.1Z" fill="#8c8c8c"/>
<path d="M408.9 690.7h5v16h-5z M415.0 696h4.6v10.7h-4.6z M420.7 690.7h4.4v16h-4.4z" fill="#3cb00c"/>
<path d="M397.2 719.1L402.2 723.1L397.2 727.1Z" fill="#8c8c8c"/>
<path d="M408.9 714.7h5v16h-5z M415.0 720h4.6v10.7h-4.6z M420.7 714.7h4.4v16h-4.4z" fill="#3cb00c"/>
</svg>
<div class="t" style="left:46px;top:27.8px;font-size:12px;color:#363636">Favorites</div>
<div class="t" style="left:46px;top:51.8px;font-size:12px;color:#363636">Recent</div>
<div class="t" style="left:46px;top:75.8px;font-size:12px;color:#363636">My Content</div>
<div class="t" style="left:46px;top:99.8px;font-size:12px;color:#363636">Workgroup Content</div>
<div class="t" style="left:46px;top:123.8px;font-size:12px;color:#363636">Public Content</div>
<div class="t" style="left:57.5px;top:147.8px;font-size:12px;color:#363636">_Samples</div>
<div class="t" style="left:70px;top:171.8px;font-size:12px;color:#363636">treemap</div>
<div class="t" style="left:70px;top:195.8px;font-size:12px;color:#363636">pie dots</div>
<div class="t" style="left:70px;top:219.8px;font-size:12px;color:#363636">marimekko</div>
<div class="t" style="left:70px;top:243.8px;font-size:12px;color:#363636">grid+kpi</div>
</div><!-- /tree -->
<!-- red frame -->
<div class="a" style="left:351px;top:406px;width:317px;height:342px;border:3px solid #ee4444;box-shadow:0 3px 6px rgba(0,0,0,0.45)"></div>
<!-- bottom tabs -->
<div class="a" style="left:0;top:762px;width:953px;height:17px;background:#262626"></div>
<div class="a" style="left:-10px;top:765px;width:457.6px;height:20px;border:3px solid #b557d2;border-radius:0 5px 0 0"></div>
<div class="a" style="left:602px;top:765px;width:360px;height:20px;border:3px solid #b557d2;border-radius:5px 0 0 0"></div>
<div class="a" style="left:0;top:771px;width:117px;height:8px;background:#4a4d51"></div>
<div class="a" style="left:120px;top:771px;width:91.5px;height:8px;background:#4a4d51"></div>
<div class="a" style="left:214px;top:771px;width:126px;height:8px;background:#4a4d51"></div>
<div class="a" style="left:342.5px;top:771px;width:99.5px;height:8px;background:#4a4d51"></div>
<div class="a" style="left:607.5px;top:771px;width:100.5px;height:8px;background:#4a4d51"></div>
<div class="a" style="left:711px;top:771px;width:113px;height:8px;background:#4a4d51"></div>
<div class="a" style="left:827px;top:771px;width:97px;height:8px;background:#4a4d51"></div>
<div class="a" style="left:942.6px;top:776px;width:2.4px;height:3px;background:#e8e8e8"></div>
<svg class="a" style="left:0;top:770px" width="953" height="9" viewBox="0 770 953 9">
 <g fill="#3cb50a">
  <rect x="2" y="777" width="3" height="2"/><rect x="10" y="776" width="3" height="3"/>
  <rect x="137" y="777" width="3" height="2"/><rect x="144" y="776" width="3" height="3"/>
  <rect x="229" y="777" width="3" height="2"/><rect x="236" y="776" width="3" height="3"/>
  <rect x="354" y="777" width="3" height="2"/><rect x="361" y="776" width="3" height="3"/>
  <rect x="623" y="777" width="3" height="2"/><rect x="632" y="776" width="3" height="3"/>
  <rect x="726" y="777" width="3" height="2"/><rect x="734" y="776" width="3" height="3"/>
  <rect x="842" y="777" width="3" height="2"/><rect x="850" y="776" width="3" height="3"/>
 </g>
 <g fill="#9aa0a6">
  <rect x="21" y="777" width="2" height="2"/><rect x="52" y="777" width="6" height="2"/><rect x="93" y="777" width="1.5" height="2"/>
  <rect x="172" y="777" width="1.5" height="2"/><rect x="186" y="777" width="1.5" height="2"/><rect x="196" y="777" width="1.5" height="2"/>
  <rect x="258" y="777" width="1.5" height="2"/><rect x="271" y="777" width="1.5" height="2"/><rect x="303" y="777" width="1.5" height="2"/>
  <rect x="385" y="777" width="1.5" height="2"/>
  <rect x="650" y="777" width="1.5" height="2"/><rect x="667" y="777" width="1.5" height="2"/><rect x="693" y="777" width="1.5" height="2"/>
  <rect x="760" y="777" width="1.5" height="2"/><rect x="800" y="777" width="1.5" height="2"/>
  <rect x="875" y="777" width="1.5" height="2"/><rect x="905" y="777" width="1.5" height="2"/>
 </g>
 <rect x="465.5" y="776.5" width="8" height="4" fill="#7a3f8f" stroke="#b557d2" stroke-width="1.5"/>
</svg>
<div class="t" style="left:482px;top:775.5px;font-size:12.5px;font-weight:700;color:#f0f0f0">GM performance</div>

</body></html>
